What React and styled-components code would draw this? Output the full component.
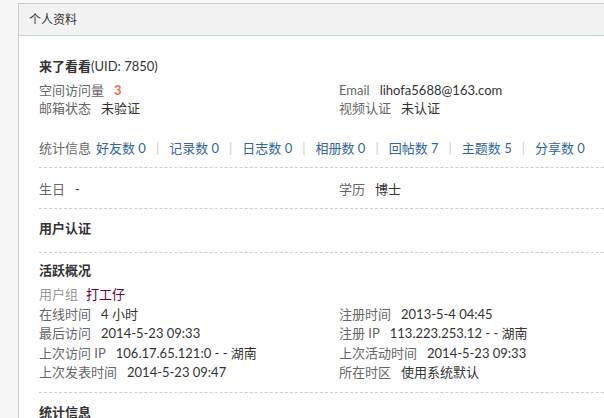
import React from 'react'
import styled, {createGlobalStyle} from 'styled-components'

const GlobalStyle = createGlobalStyle`
  html, body {
    margin: 0;
    padding: 0;
    background: #f7f7f7;
    overflow: hidden;
  }
  body {
    font-family: Lato, "Noto Sans CJK SC", sans-serif;
    font-size: 13px;
    color: #333;
  }
`;

const Page = styled.div`
  padding: 3px 0 0 18px;
  height: 415px;
`;

const Panel = styled.div`
  width: 640px;
  background: #fff;
  border: 1px solid #ccc;
  border-right: none;
  height: 100%;
`;

const PanelHead = styled.div`
  height: 31px;
  line-height: 32px;
  padding-left: 10px;
  background: #f2f2f2;
  border-bottom: 1px solid #c2d5e3;
  font-size: 12px;
  color: #333;
`;

const PanelBody = styled.div`
  padding-left: 20px;
`;

const Section = styled.div`
  padding: ${props => props.pad || '10px 0 10px'};
  border-bottom: ${props => props.last ? 'none' : '1px dashed #cdcdcd'};
`;

const Title = styled.h2`
  margin: 0 0 ${props => props.mb || 0}px;
  font-size: 13px;
  font-weight: bold;
  line-height: ${props => props.lh || 18}px;
  color: #333;

  span {
    font-weight: normal;
  }
`;

const Cols = styled.ul`
  list-style: none;
  margin: 0;
  padding: 0;
  display: grid;
  grid-template-columns: 300px 300px;
`;

const Item = styled.li`
  line-height: ${props => props.lh || 18}px;
  white-space: nowrap;
`;

const Label = styled.em`
  font-style: normal;
  color: ${props => props.light ? '#999' : '#666'};
  margin-right: ${props => props.gap || 10}px;
`;

const Count = styled.strong`
  color: #f26c4f;
`;

const Group = styled.span`
  color: #660033;
`;

const Stats = styled.div`
  margin-top: 22px;
  line-height: 18px;
  white-space: nowrap;
`;

const StatLink = styled.a`
  color: #336699;
  text-decoration: none;
`;

const Pipe = styled.span`
  color: #ccc;
  margin: 0 10px;
`;

const stats = [
  ['好友数', 0], ['记录数', 0], ['日志数', 0], ['相册数', 0],
  ['回帖数', 7], ['主题数', 5], ['分享数', 0],
]

const activity = [
  ['在线时间', '4 小时'],
  ['注册时间', '2013-5-4 04:45'],
  ['最后访问', '2014-5-23 09:33'],
  ['注册 IP', '113.223.253.12 - - 湖南'],
  ['上次访问 IP', '106.17.65.121:0 - - 湖南'],
  ['上次活动时间', '2014-5-23 09:33'],
  ['上次发表时间', '2014-5-23 09:47'],
  ['所在时区', '使用系统默认'],
]

const App = () => {
  return (
    <>
      <GlobalStyle />
      <Page>
        <Panel>
          <PanelHead>个人资料</PanelHead>
          <PanelBody>
            <Section pad="20px 0 10px">
              <Title lh={20} mb={5}>来了看看<span>(UID: 7850)</span></Title>
              <Cols>
                <Item><Label>空间访问量</Label><Count>3</Count></Item>
                <Item><Label>Email</Label>lihofa5688@163.com</Item>
                <Item><Label>邮箱状态</Label>未验证</Item>
                <Item><Label>视频认证</Label>未认证</Item>
              </Cols>
              <Stats>
                <Label gap={5}>统计信息</Label>
                {stats.map(([name, n], i) => (
                  <React.Fragment key={name}>
                    {i > 0 && <Pipe>|</Pipe>}
                    <StatLink href="#">{name} {n}</StatLink>
                  </React.Fragment>
                ))}
              </Stats>
            </Section>

            <Section pad="12px 0 10px">
              <Cols>
                <Item><Label>生日</Label>-</Item>
                <Item><Label>学历</Label>博士</Item>
              </Cols>
            </Section>

            <Section pad="10px 0 15px">
              <Title>用户认证</Title>
            </Section>

            <Section pad="8px 0 9px">
              <Title mb={6}>活跃概况</Title>
              <Item as="div" lh={19.5}><Label light gap={8}>用户组</Label><Group>打工仔</Group></Item>
              <Cols>
                {activity.map(([label, value]) => (
                  <Item key={label} lh={19.5}><Label>{label}</Label>{value}</Item>
                ))}
              </Cols>
            </Section>

            <Section pad="10px 0 10px" last>
              <Title>统计信息</Title>
            </Section>
          </PanelBody>
        </Panel>
      </Page>
    </>
  )
}

export default App
